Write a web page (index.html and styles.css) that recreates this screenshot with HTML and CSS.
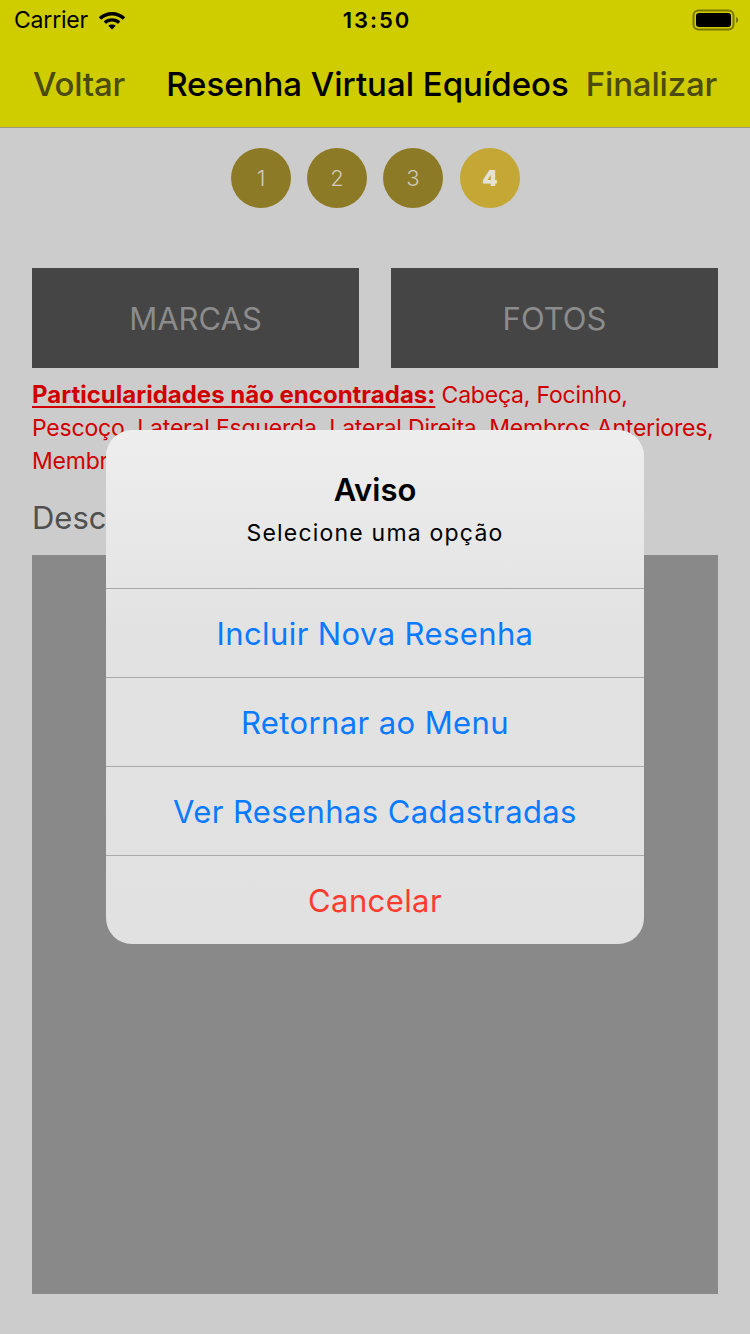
FILE: index.html
```html
<!DOCTYPE html>
<html lang="pt-BR">
<head>
<meta charset="utf-8">
<title>Resenha Virtual Equídeos</title>
<link rel="stylesheet" href="styles.css">
</head>
<body>
<div class="screen">
  <header class="topbar">
    <div class="status">
      <div class="status-left">
        <span class="carrier">Carrier</span>
        <svg class="wifi" width="30" height="22" viewBox="0 0 30 22">
          <path d="M15 4C9.8 4 5.2 6 1.8 9.2L4.2 11.7C7 9 10.8 7.4 15 7.4S23 9 25.8 11.7L28.2 9.2C24.8 6 20.2 4 15 4Z" fill="#000"/>
          <path d="M15 10.2C11.8 10.2 8.9 11.4 6.7 13.4L9.2 15.9C10.7 14.5 12.8 13.6 15 13.6S19.3 14.5 20.8 15.9L23.3 13.4C21.1 11.4 18.2 10.2 15 10.2Z" fill="#000"/>
          <path d="M15 16.4C13.5 16.4 12.3 16.9 11.3 17.8L15 21.6L18.7 17.8C17.7 16.9 16.5 16.4 15 16.4Z" fill="#000"/>
        </svg>
      </div>
      <span class="time">13:50</span>
      <div class="status-right">
        <svg class="battery" width="48" height="22" viewBox="0 0 48 22">
          <rect x="1.5" y="1.5" width="40" height="19" rx="5" fill="none" stroke="#7a7800" stroke-width="2"/>
          <rect x="4" y="4" width="35" height="14" rx="3" fill="#000"/>
          <path d="M44 8v6c1.3-.4 2.2-1.6 2.2-3s-.9-2.6-2.2-3z" fill="#7a7800"/>
        </svg>
      </div>
    </div>
    <nav class="navbar">
      <span class="nav-btn nav-left">Voltar</span>
      <span class="nav-title">Resenha Virtual Equídeos</span>
      <span class="nav-btn nav-right">Finalizar</span>
    </nav>
  </header>

  <main class="content">
    <div class="steps">
      <span class="step">1</span>
      <span class="step">2</span>
      <span class="step">3</span>
      <span class="step step-active">4</span>
    </div>

    <div class="tabs">
      <div class="tab">MARCAS</div>
      <div class="tab">FOTOS</div>
    </div>

    <p class="missing"><span class="missing-label">Particularidades não encontradas:</span> Cabeça, Focinho, Pescoço, Lateral Esquerda, Lateral Direita, Membros Anteriores, Membros Posteriores</p>

    <div class="desc-label">Descrição</div>
    <div class="desc-box"></div>
  </main>

  <div class="alert">
    <div class="alert-head">
      <div class="alert-title">Aviso</div>
      <div class="alert-msg">Selecione uma opção</div>
    </div>
    <div class="alert-action">Incluir Nova Resenha</div>
    <div class="alert-action">Retornar ao Menu</div>
    <div class="alert-action">Ver Resenhas Cadastradas</div>
    <div class="alert-action alert-cancel">Cancelar</div>
  </div>
</div>
</body>
</html>
```

FILE: styles.css
```css
* { box-sizing: border-box; }
html, body { margin: 0; padding: 0; }
body {
  width: 750px;
  height: 1334px;
  background: #cccccc;
  font-family: Inter, Roboto, "Liberation Sans", sans-serif;
  overflow: hidden;
}
.screen {
  position: relative;
  width: 750px;
  height: 1334px;
}
.topbar {
  background: #cfcc00;
  border-bottom: 1px solid #9a9a80;
}
.status {
  height: 40px;
  display: flex;
  align-items: center;
  justify-content: space-between;
  padding: 0 10px 0 14px;
}
.status-left { display: flex; align-items: center; gap: 9px; width: 200px; }
.carrier { font-size: 23px; color: #000; letter-spacing: -0.2px; }
.wifi { margin-top: -2px; }
.time {
  font-size: 22px;
  font-weight: 600;
  color: #000;
  letter-spacing: 2px;
}
.status-right { width: 200px; display: flex; justify-content: flex-end; }
.navbar {
  height: 87px;
  display: flex;
  align-items: center;
  justify-content: space-between;
  padding: 0 33px 0 33px;
}
.nav-btn {
  font-size: 33px;
  font-weight: 500;
  color: #4b4a10;
  letter-spacing: -0.2px;
}
.nav-title {
  font-size: 33px;
  font-weight: 500;
  color: #000;
  letter-spacing: 0;
  margin-left: 24px;
}
.content { padding: 0 32px; }
.steps {
  display: flex;
  justify-content: center;
  gap: 16px;
  padding-top: 20px;
  padding-left: 1px;
}
.step {
  width: 60px;
  height: 60px;
  border-radius: 50%;
  background: #8d7a26;
  color: #cfcabb;
  font-size: 22px;
  font-weight: 300;
  display: flex;
  align-items: center;
  justify-content: center;
}
.step-active {
  background: #c4a734;
  font-weight: 900;
  color: #e6e2d6;
  margin-left: 1px;
}
.tabs {
  display: flex;
  gap: 32px;
  margin-top: 60px;
}
.tab {
  flex: 1;
  height: 100px;
  background: #454545;
  color: #8c8c8c;
  font-size: 31px;
  font-weight: 400;
  display: flex;
  align-items: center;
  justify-content: center;
}
.missing {
  margin: 10px 0 0;
  font-size: 23px;
  line-height: 33px;
  color: #d00000;
  letter-spacing: -0.2px;
}
.missing-label {
  font-size: 24px;
  font-weight: 700;
  letter-spacing: 0;
  text-decoration: underline;
  text-underline-offset: 3px;
}
.desc-label {
  margin-top: 20px;
  font-size: 31px;
  color: #505050;
  line-height: 40px;
}
.desc-box {
  margin-top: 17px;
  height: 739px;
  background: #898989;
}
.alert {
  position: absolute;
  left: 106px;
  top: 430px;
  width: 538px;
  border-radius: 26px;
  background: linear-gradient(#efeeee, #e2e2e2 40%, #e1e1e1);
  overflow: hidden;
}
.alert-head {
  height: 159px;
  padding-top: 41px;
  text-align: center;
  border-bottom: 1px solid #a9a9a9;
}
.alert-title {
  font-size: 31px;
  font-weight: 600;
  color: #000;
  line-height: 38px;
}
.alert-msg {
  margin-top: 9px;
  font-size: 23px;
  color: #000;
  line-height: 30px;
  letter-spacing: 1.2px;
}
.alert-action {
  height: 89px;
  display: flex;
  align-items: center;
  justify-content: center;
  font-size: 31px;
  color: #0a7aff;
  letter-spacing: 0.4px;
  border-bottom: 1px solid #a9a9a9;
}
.alert-action.alert-cancel {
  border-bottom: none;
  height: 88px;
  color: #ff3b30;
}
```
